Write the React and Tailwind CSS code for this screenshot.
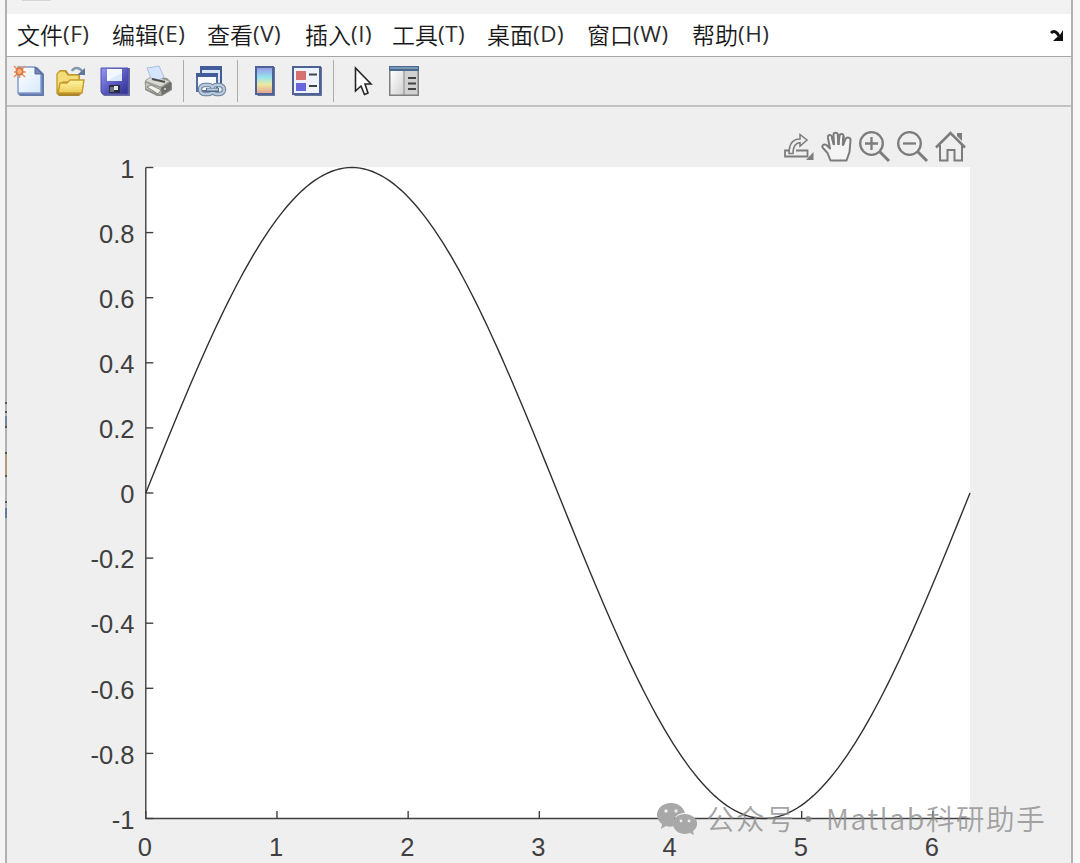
import React from 'react';

const MENU_ITEMS = [
  { label: '文件', key: '(F)', width: 'w-[95px]' },
  { label: '编辑', key: '(E)', width: 'w-[95px]' },
  { label: '查看', key: '(V)', width: 'w-[98px]' },
  { label: '插入', key: '(I)', width: 'w-[87px]' },
  { label: '工具', key: '(T)', width: 'w-[95px]' },
  { label: '桌面', key: '(D)', width: 'w-[100px]' },
  { label: '窗口', key: '(W)', width: 'w-[105px]' },
  { label: '帮助', key: '(H)', width: 'w-[90px]' },
];

// --- Axes geometry ---
const LEFT = 145.8;
const RIGHT = 970;
const TOP = 167.5;
const BOTTOM = 818.5;
const toX = (x) => LEFT + (x / (2 * Math.PI)) * (RIGHT - LEFT);
const toY = (y) => TOP + ((1 - y) / 2) * (BOTTOM - TOP);

const X_TICKS = [0, 1, 2, 3, 4, 5, 6];
const Y_TICKS = [1, 0.8, 0.6, 0.4, 0.2, 0, -0.2, -0.4, -0.6, -0.8, -1];

const curve = Array.from({ length: 201 }, (_, i) => {
  const x = (i / 200) * 2 * Math.PI;
  return `${toX(x).toFixed(2)},${toY(Math.sin(x)).toFixed(2)}`;
}).join(' ');

// --- Toolbar icons ---
const NewIcon = () => (
  <svg className="w-8 h-8" viewBox="0 0 32 32">
    <defs>
      <linearGradient id="paper" x1="0" y1="0" x2="1" y2="1">
        <stop offset="0" stopColor="#ffffff" />
        <stop offset="1" stopColor="#d5e9fc" />
      </linearGradient>
    </defs>
    <path d="M5 2H24L31 9V31H7L5 29Z" fill="#647aa8" />
    <path d="M5 2H22L28 9V28H5Z" fill="url(#paper)" stroke="#839bd0" strokeWidth="1.5" />
    <path d="M22 2V9H29Z" fill="#7488b6" stroke="#546997" />
    <g stroke="#ec915f" strokeWidth="1.6">
      <path d="M6.5 1V13M1 7H13M1 1L12 12M12 1L1 12" />
      <circle cx="6.5" cy="6.5" r="3.2" fill="#f7b27d" stroke="#dc733d" />
    </g>
  </svg>
);

const OpenIcon = () => (
  <svg className="w-8 h-8" viewBox="0 0 32 32">
    <defs>
      <linearGradient id="folder" x1="0" y1="0" x2="0" y2="1">
        <stop offset="0" stopColor="#fff6a6" />
        <stop offset="1" stopColor="#eccb55" />
      </linearGradient>
    </defs>
    <path d="M2 29V9L5 5H11L14 9H25V15H29V19L27 28L24 31H4Z" fill="#a9852d" />
    <path d="M2 27V9L5 6H10L13 10H24V17H8Z" fill="#f6dc78" stroke="#c79e32" strokeWidth="1.4" />
    <path d="M3 28L5 18H12L15 15H29L27 28Z" fill="url(#folder)" stroke="#c79b2c" strokeWidth="1.4" />
    <path d="M17 6C19 2 24 2 27 6" fill="none" stroke="#8298ae" strokeWidth="2.5" />
    <path d="M30 3V10H22Z" fill="#60799a" />
  </svg>
);

const SaveIcon = () => (
  <svg className="w-8 h-8" viewBox="0 0 32 32">
    <defs>
      <linearGradient id="disk" x1="0" y1="0" x2="1" y2="1">
        <stop offset="0" stopColor="#9797f0" />
        <stop offset="0.6" stopColor="#5353ba" />
        <stop offset="1" stopColor="#30308c" />
      </linearGradient>
    </defs>
    <path d="M2 3H31V31H5L2 28Z" fill="#6b6f9c" />
    <path d="M2 3H29V29H4L2 27Z" fill="url(#disk)" stroke="#4c4cb1" />
    <path d="M8 4H23V16H8Z" fill="#f3f8ff" />
    <path d="M8 16L23 8V16Z" fill="#dce9fb" />
    <path d="M10 20H21V28H10Z" fill="#292e45" />
    <path d="M11 22H15V27H11Z" fill="#6d7280" />
    <path d="M15 21H19V25H15Z" fill="#e7e8e6" />
  </svg>
);

const PrintIcon = () => (
  <svg className="w-8 h-8" viewBox="0 0 32 32">
    <path d="M3 16L10 11L25 13L30 18V25L20 31H15L3 25Z" fill="#8b8c87" />
    <path d="M3 16L10 11L28 16L19 22Z" fill="#d9d9d3" stroke="#a3a39c" />
    <path d="M3 17L19 23V30L4 24Z" fill="#c6c6c0" stroke="#999" />
    <path d="M19 23L29 17V24L20 30Z" fill="#6e6e6a" />
    <path d="M9 13L5 3L17 1L22 12L17 15Z" fill="#d5e6fc" stroke="#a9c0e2" />
    <path d="M10 14L23 17" stroke="#4c4c49" strokeWidth="2" />
    <path d="M5 22L9 20L19 25L16 29Z" fill="#f2f2ec" stroke="#858580" />
    <circle cx="23" cy="24" r="1" fill="#ddd" />
  </svg>
);

const LinkIcon = () => (
  <svg className="w-8 h-8" viewBox="0 0 32 32">
    <path d="M6 2H26V21H6Z" fill="#dce6f5" stroke="#455d96" strokeWidth="2" />
    <path d="M5 1H27V5H5Z" fill="#435c9c" />
    <path d="M2 9H22V26H2Z" fill="#f8faff" stroke="#566b9e" strokeWidth="2" />
    <path d="M1 8H23V12H1Z" fill="#435c9c" />
    <g fill="none">
      <rect x="5" y="20" width="13" height="9" rx="4.5" stroke="#6a819b" strokeWidth="4.4" />
      <rect x="17" y="20" width="12" height="9" rx="4.5" stroke="#6a819b" strokeWidth="4.4" />
      <rect x="5" y="20" width="13" height="9" rx="4.5" stroke="#b9cade" strokeWidth="2.4" />
      <rect x="17" y="20" width="12" height="9" rx="4.5" stroke="#b9cade" strokeWidth="2.4" />
      <path d="M11 25H24" stroke="#526b86" strokeWidth="4" />
      <path d="M12 24.5H23" stroke="#bdcce0" strokeWidth="2" />
    </g>
  </svg>
);

const ColorbarIcon = () => (
  <svg className="w-[22px] h-8" viewBox="0 0 22 32">
    <defs>
      <linearGradient id="spectrum" x1="0" y1="0" x2="0" y2="1">
        <stop offset="0" stopColor="#9695e7" />
        <stop offset="0.38" stopColor="#96e4ed" />
        <stop offset="0.65" stopColor="#eceaa4" />
        <stop offset="1" stopColor="#e39b8b" />
      </linearGradient>
    </defs>
    <path d="M2 2H21V31H4L2 29Z" fill="#667697" />
    <path d="M2 2H19V29H2Z" fill="url(#spectrum)" stroke="#4e6297" strokeWidth="2" />
  </svg>
);

const LegendIcon = () => (
  <svg className="w-8 h-8" viewBox="0 0 32 32">
    <path d="M2 2H31V31H4L2 29Z" fill="#667697" />
    <path d="M2 2H29V29H2Z" fill="#eef3fd" stroke="#4e6297" strokeWidth="2" />
    <path d="M5 6H15V15H5Z" fill="#d77070" />
    <path d="M5 18H15V26H5Z" fill="#6868de" />
    <path d="M18 9.5H26M18 21H26" stroke="#414347" strokeWidth="2.2" />
  </svg>
);

const PointerIcon = () => (
  <svg className="w-5 h-8" viewBox="0 0 20 32">
    <path d="M1.5 3V26L7 21L10.5 29.5L14 28L11 19H17Z" fill="#fff" stroke="#262626" strokeWidth="1.6" />
  </svg>
);

const InspectorIcon = () => (
  <svg className="w-8 h-8" viewBox="0 0 32 32">
    <defs>
      <linearGradient id="pane" x1="0" y1="0" x2="1" y2="1">
        <stop offset="0" stopColor="#ffffff" />
        <stop offset="1" stopColor="#d2d2d2" />
      </linearGradient>
    </defs>
    <path d="M1 1H31V31H1Z" fill="#7f7f7f" />
    <path d="M2.5 6H15V29.5H2.5Z" fill="url(#pane)" />
    <path d="M17 6H29.5V29.5H17Z" fill="#d0d0d0" />
    <path d="M15 6H17V29.5H15Z" fill="#b0b0b0" />
    <path d="M1 1H31V6H1Z" fill="#49698d" />
    <path d="M2 2H30V4H2Z" fill="#7796b3" />
    <path d="M20 13H28M20 18.5H28M20 24H28" stroke="#414141" strokeWidth="2.2" />
  </svg>
);

const Separator = () => <div className="w-px h-[42px] bg-[#acacac]" />;

// Export, pan, zoom in, zoom out, restore view
const AxesToolbar = () => (
  <div className="absolute top-6 left-[776px] flex text-[#7c7c7c]">
    <svg className="w-[38px] h-8" viewBox="0 0 38 32" fill="none" stroke="currentColor" strokeWidth="1.8">
      <path d="M7 19.5H2V25.5H24.5V19.5H13" />
      <path d="M6 22.5C6 13 10 8 17 8V3.5L24 9L17 15V11.5C12 12 10 16 10 22.5Z" strokeWidth="1.5" />
      <path d="M30.5 21V29H23Z" fill="currentColor" stroke="none" />
    </svg>
    <svg className="w-[38px] h-8" viewBox="0 0 38 32" fill="none" stroke="currentColor" strokeWidth="2" strokeLinejoin="round">
      <path
        d="M9.5 29.5L6.5 22L2 17C0 14.5 3 12.5 5.5 14L9 17.5L7 7C6.5 3.5 10 3 11 6L13 13L12.5 4C12.5 1 16.5 1 17 4L17.5 13L18.5 5C19 2 23 2.5 22.5 5.5L22 14L24.5 8C26 5.5 30 6.5 29.5 9.5L28.5 21L25.5 29.5Z"
        fill="#f4f4f4"
      />
      <path d="M11 6L13 14M17 4L17.5 14M22.5 5.5L22 14" strokeWidth="2.4" />
    </svg>
    <svg className="w-[38px] h-8" viewBox="0 0 38 32" fill="none" stroke="currentColor" strokeWidth="2.3">
      <circle cx="12.5" cy="12.5" r="11.3" />
      <path d="M6 12.5H19M12.5 6V19" />
      <path d="M20 20L30 30" strokeWidth="3" />
    </svg>
    <svg className="w-[38px] h-8" viewBox="0 0 38 32" fill="none" stroke="currentColor" strokeWidth="2.3">
      <circle cx="12.5" cy="12.5" r="11.3" />
      <path d="M6 12.5H19" />
      <path d="M20 20L30 30" strokeWidth="3" />
    </svg>
    <svg className="w-8 h-8" viewBox="0 0 32 32" fill="none" stroke="currentColor" strokeWidth="2">
      <path d="M1 16.5L15.5 2L30 16.5" strokeWidth="2.5" />
      <path d="M5 14V29.5H12.5V19H19.5V29.5H27V14" />
      <path d="M22 2H27V10L22 5Z" fill="currentColor" stroke="none" />
    </svg>
  </div>
);

const Plot = () => (
  <svg
    className="block w-[1064px] h-[756px]"
    viewBox="7 107 1064 756"
    fontFamily="'Liberation Sans', Arial, sans-serif"
    fontSize="25.5"
    fill="#404040"
  >
    <rect x={LEFT} y="167" width={RIGHT - LEFT} height="652" fill="#ffffff" />
    <g stroke="#404040" strokeWidth="1.4" fill="none">
      <path d={`M${LEFT} ${TOP}V${BOTTOM}H${RIGHT}`} />
      {Y_TICKS.map((t) => (
        <path key={t} d={`M${LEFT} ${toY(t)}h7.5`} />
      ))}
      {X_TICKS.map((t) => (
        <path key={t} d={`M${toX(t)} ${BOTTOM}v-7.5`} />
      ))}
      <polyline points={curve} stroke="#303030" strokeWidth="1.4" />
    </g>
    {Y_TICKS.map((t) => (
      <text key={t} x="134.5" y={toY(t) + 10.2} textAnchor="end">{t}</text>
    ))}
    {X_TICKS.map((t) => (
      <text key={t} x={toX(t) - 0.9} y="856" textAnchor="middle">{t}</text>
    ))}
  </svg>
);

const Watermark = () => (
  <div className="absolute left-[650px] top-[696px] flex items-center h-8 text-[#8c8c8c]/80 whitespace-nowrap font-['Noto_Sans_CJK_SC',sans-serif] text-[28.5px] leading-7">
    <svg className="w-10 h-8" viewBox="0 0 40 32">
      <path d="M14 0C6 0 0 5 0 12C0 16 2 19 5 21L4 26L9 23C11 24 14 24 17 23C15 14 21 10 28 10C26 3 20 0 14 0Z" fill="#a8a8a8" />
      <path d="M28 11C21 11 16 15 16 21C16 27 22 31 28 31C30 31 32 30 33 30L37 32L36 28C45 21 38 11 28 11Z" fill="#a8a8a8" />
      <g fill="#eeeeee">
        <circle cx="9" cy="8" r="1.7" />
        <circle cx="19" cy="8" r="1.7" />
        <circle cx="24" cy="18" r="1.4" />
        <circle cx="32" cy="18" r="1.4" />
      </g>
    </svg>
    <span className="relative -top-px ml-[9px] w-[88px] tracking-[1.4px] font-[350]">公众号</span>
    <span className="relative -top-px w-[32px]">·</span>
    <span className="relative -top-px tracking-[1.6px] font-[350]">Matlab科研助手</span>
  </div>
);

const App = () => {
  return (
    <div className="w-[1080px] h-[863px] bg-white overflow-hidden flex">
      <div className="w-[5px] bg-[#f5f5f5]"></div>

      {/* Left window edge, with bits of the window behind it */}
      <div className="w-[2px] bg-[#b1b1b1] pt-[402px]">
        <div className="h-[2px] bg-[#555555]"></div>
        <div className="h-[2px] mt-[7px] bg-[#555555]"></div>
        <div className="h-[12px] mt-[3px] bg-[#7184a0] border-b-2 border-[#555555]"></div>
        <div className="h-[25px] mt-[24px] bg-[#b49b74] border-y-2 border-[#555555]"></div>
        <div className="h-[2px] mt-[24px] bg-[#555555]"></div>
        <div className="h-[10px] mt-[5px] bg-[#637b9c]"></div>
      </div>

      <div className="w-[1064px] flex flex-col bg-[#efefef]">
        {/* Title bar bottom */}
        <div className="h-[14px] bg-[#f2f2f2] pl-[15px]">
          <div className="w-[29px] h-px bg-[#d5d5d5]"></div>
        </div>

        {/* Menu bar */}
        <div className="h-[43px] bg-white border-b border-[#a7a7a7] flex items-center pl-[10px] pb-[2px] text-[#181818]">
          {MENU_ITEMS.map((item) => (
            <div key={item.key} className={`${item.width} flex items-center whitespace-nowrap leading-10`}>
              <span className="text-[23px] font-[350] font-['Noto_Sans_CJK_SC',sans-serif]">{item.label}</span>
              <span className="text-[22.5px] tracking-[0.5px] text-[#2c2c2c] font-['Open_Sans',sans-serif] font-normal">{item.key}</span>
            </div>
          ))}
          <svg className="w-4 h-4 ml-auto mr-[6px] mt-[3px]" viewBox="0 0 16 16">
            <path d="M2 5C5 2 8 4 10 8" fill="none" stroke="#111" strokeWidth="3" />
            <path d="M14 2V13H4L7 10L11 7Z" fill="#111" />
          </svg>
        </div>

        {/* Toolbar */}
        <div className="h-[50px] border-b-2 border-[#c2c2c2] flex items-center pl-[6px] pb-[1px]">
          <NewIcon />
          <div className="ml-[10px]"><OpenIcon /></div>
          <div className="ml-[12px]"><SaveIcon /></div>
          <div className="ml-[11px] mr-[9px]"><PrintIcon /></div>
          <Separator />
          <div className="ml-[11px] mr-[10px]"><LinkIcon /></div>
          <Separator />
          <div className="ml-[16px]"><ColorbarIcon /></div>
          <div className="ml-[15px] mr-[10px]"><LegendIcon /></div>
          <Separator />
          <div className="ml-[20px]"><PointerIcon /></div>
          <div className="ml-[14px]"><InspectorIcon /></div>
        </div>

        {/* Figure */}
        <div className="relative h-[756px]">
          <Plot />
          <AxesToolbar />
          <Watermark />
        </div>
      </div>

      <div className="w-[2px] bg-[#b1b1b1]"></div>
      <div className="w-[7px] bg-[#f8f8f8]"></div>
    </div>
  );
};

export default App;
